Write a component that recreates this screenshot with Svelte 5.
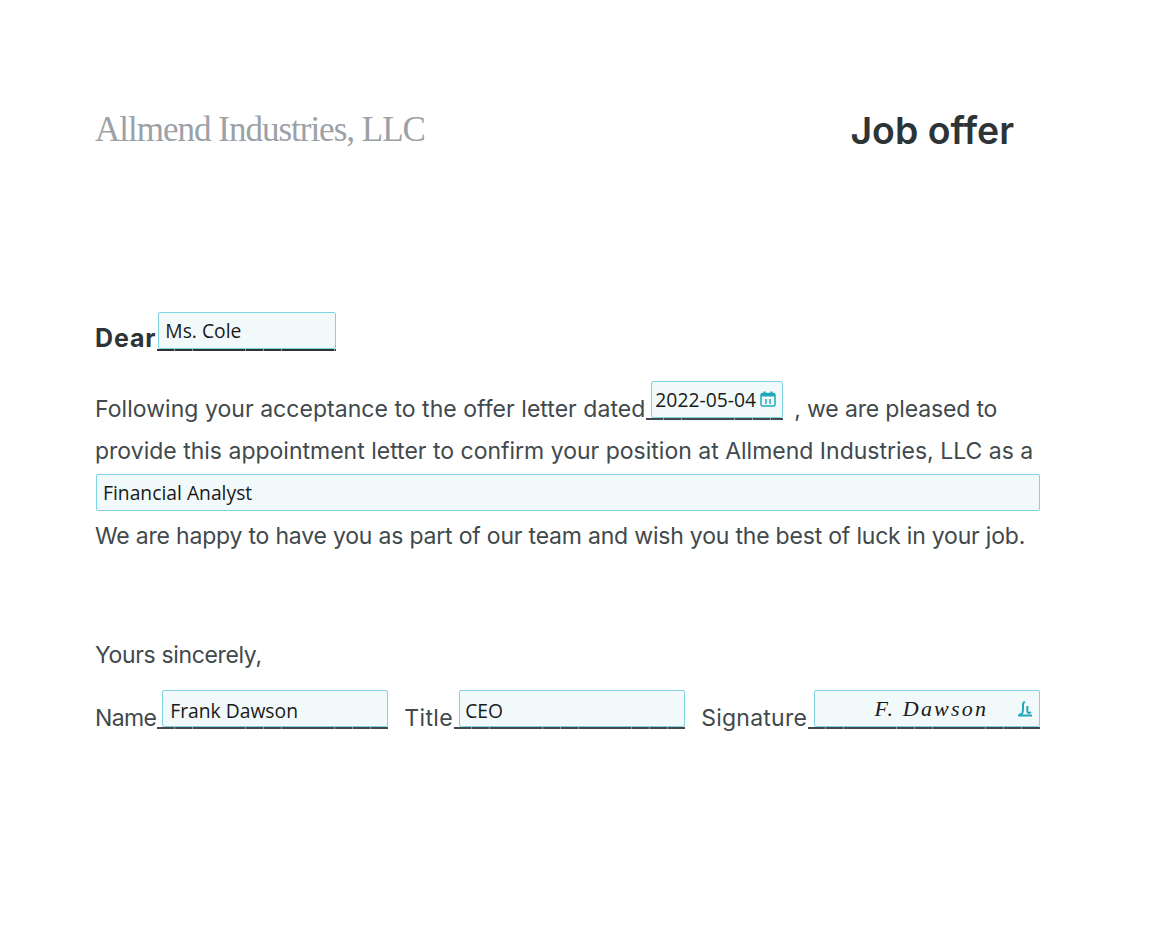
<script lang="ts">
  let recipient = $state('Ms. Cole')
  let offerDate = $state('2022-05-04')
  let position = $state('Financial Analyst')
  let signerName = $state('Frank Dawson')
  let signerTitle = $state('CEO')
</script>

<div class="page">
  <header class="top">
    <div class="company">Allmend Industries, LLC</div>
    <h1>Job offer</h1>
  </header>

  <p class="dear">
    <strong>Dear</strong><span class="blank recipient"><input class="field" bind:value={recipient} aria-label="Recipient" /></span>
  </p>

  <div class="copy">
    <p>
      <span class="lead">Following your acceptance to the offer letter dated</span><span class="blank date"><input class="field" bind:value={offerDate} aria-label="Date" /><svg class="cal" viewBox="0 0 16 16" aria-hidden="true"><rect class="frame" x="1" y="2.500" width="14" height="12.500" rx="1.500" /><path class="band" d="M1 3h14v2.500H1zM3.500 .5h2v3h-2zM10.500 .5h2v3h-2z" /><path class="frame" d="M6 8v5M10 8v5" /></svg></span>&nbsp; <span class="tail">, we are pleased to</span>
      provide this appointment letter to confirm your position at Allmend Industries, LLC as a
    </p>
    <input class="field wide" bind:value={position} aria-label="Position" />
    <p class="closing">We are happy to have you as part of our team and wish you the best of luck in your job.</p>
  </div>

  <p class="sincerely">Yours sincerely,</p>

  <div class="sign-row">
    <span class="name-label">Name<span class="blank"><input class="field name" bind:value={signerName} aria-label="Name" /></span></span>
    <span>Title<span class="blank"><input class="field title" bind:value={signerTitle} aria-label="Title" /></span></span>
    <span class="sig-label">Signature<span class="blank sig">
      <span class="field signature">
        <span class="ink">F. Dawson</span>
        <svg class="pen" viewBox="0 0 16 16" aria-hidden="true"><path d="M8 1.500C6.500 1 6 2 6 4c0 3 .2 6-.6 8-.4 1-1.500 1.400-3 1M1 14.500h14M10.500 5c-.2 2.500-.6 5 .3 6.500.6.800 2 .5 3-.5" /></svg>
      </span>
    </span></span>
  </div>
</div>

<style>
  :global(body) {
    margin: 0;
    background: #fff;
  }

  .page {
    box-sizing: border-box;
    width: 1160px;
    height: 940px;
    padding: 109px 120px 0 95px;
    font-family: Inter, "Noto Sans", sans-serif;
    font-size: 23px;
    line-height: 42px;
    color: #41494c;
  }

  p {
    margin: 0;
  }

  .top {
    display: flex;
    align-items: flex-start;
    justify-content: space-between;
    height: 178px;
    padding-right: 26px;
  }

  .company {
    font-family: "Liberation Serif", serif;
    font-size: 35px;
    line-height: 42px;
    letter-spacing: -1px;
    color: #9ba1a6;
  }

  h1 {
    margin: 0;
    font-size: 37.400px;
    line-height: 44px;
    font-weight: 600;
    color: #2d3436;
  }

  .dear {
    margin-top: 30px;
    color: #2d3436;
  }

  strong {
    font-size: 25px;
    font-weight: 700;
    letter-spacing: 0.85px;
  }

  .blank {
    position: relative;
    display: inline-block;
    width: 231px;
    height: 2px;
    margin-left: 1px;
    vertical-align: -3px;
    background: repeating-linear-gradient(to right, currentColor 0 17.200px, #9aa0a3 17.200px 17.800px);
  }

  .recipient {
    width: 179px;
    vertical-align: -4px;
  }

  .recipient .field {
    padding-left: 6px;
  }

  .date {
    width: 137px;
    margin-right: -2px;
  }

  .sig {
    width: 232px;
  }

  .field {
    position: absolute;
    left: 1px;
    right: 0;
    bottom: 2px;
    box-sizing: border-box;
    height: 37px;
    width: auto;
    padding: 0 7px;
    background: #f1f9fb;
    border: 1px solid #7fd3df;
    border-radius: 2px;
    font-family: "Open Sans", sans-serif;
    font-size: 19.300px;
    letter-spacing: 0;
    color: #1a1a1a;
    outline: none;
  }

  .copy {
    margin-top: 28px;
  }

  .lead {
    letter-spacing: 0.04px;
  }

  .tail {
    letter-spacing: -0.15px;
  }

  .closing {
    letter-spacing: -0.2px;
  }

  .wide {
    position: static;
    display: block;
    width: 944px;
    margin: 2px 0 4px 1px;
    padding-left: 6px;
  }

  .date .field {
    left: 5px;
    padding: 0 3px;
  }

  .cal {
    position: absolute;
    right: 7px;
    bottom: 13px;
    width: 16px;
    height: 16px;
    fill: none;
  }

  .cal .frame {
    stroke: #1fa9b8;
    stroke-width: 1.500;
  }

  .cal .band {
    fill: #1fa9b8;
  }

  .sincerely {
    margin-top: 77px;
    letter-spacing: -0.35px;
  }

  .sign-row {
    display: flex;
    gap: 16px;
    margin-top: 21px;
    letter-spacing: 0.4px;
    white-space: nowrap;
  }

  .name-label {
    letter-spacing: -0.65px;
  }

  .sig-label {
    letter-spacing: 0.25px;
  }

  .name {
    left: 5px;
    right: 0;
    padding-top: 3px;
  }

  .title {
    left: 5px;
    padding: 3px 5px 0;
  }

  .signature {
    display: flex;
    align-items: center;
    justify-content: flex-end;
    left: 6px;
  }

  .ink {
    font-family: "Liberation Serif", serif;
    font-style: italic;
    font-size: 22px;
    letter-spacing: 2.200px;
    margin-right: 29px;
  }

  .pen {
    width: 16px;
    height: 16px;
    fill: none;
    stroke: #1fa9b8;
    stroke-width: 2;
    margin-right: -1px;
  }
</style>
